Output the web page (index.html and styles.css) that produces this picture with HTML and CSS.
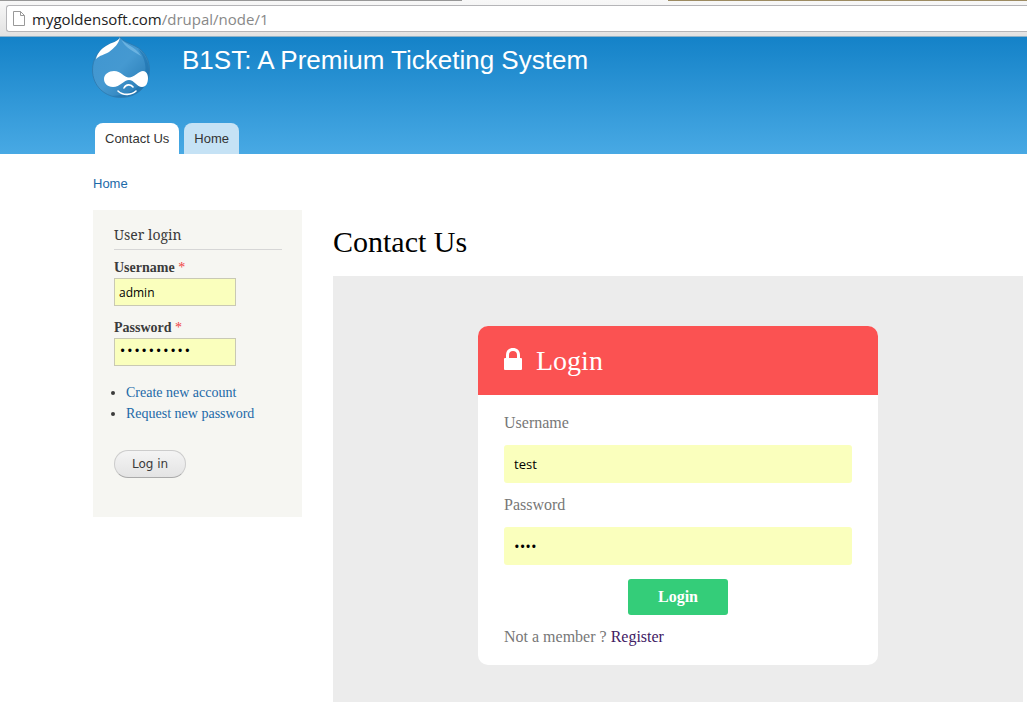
FILE: index.html
```html
<!DOCTYPE html>
<html lang="en">
<head>
<meta charset="utf-8">
<title>Contact Us | B1ST: A Premium Ticketing System</title>
<link rel="stylesheet" href="styles.css">
</head>
<body>
<div class="toolbar">
  <div class="tab-edge"><span class="tab-edge-left"></span><span class="tab-edge-right"></span></div>
  <div class="address">
    <svg class="page-icon" width="12" height="16" viewBox="0 0 12 16" fill="#fff" stroke="#999" aria-hidden="true"><path d="M.5 .5h7l4 4v10H.5zM7.500 .5v4h4"/></svg>
    <div class="url" role="textbox" aria-label="Address"><span class="host">mygoldensoft.com</span>/drupal/node/1</div>
  </div>
</div>
<header class="header">
  <div class="branding">
    <a class="logo" href="#" aria-label="Home">
      <svg width="58" height="61" viewBox="0 0 58 61" aria-hidden="true">
        <defs>
          <linearGradient id="drop" x1="0" y1="0" x2="1" y2="1"><stop offset="0" stop-color="#3f95d0"/><stop offset=".5" stop-color="#4599d1"/><stop offset="1" stop-color="#2174ae"/></linearGradient>
        </defs>
        <path fill="url(#drop)" stroke="#2f78ac" stroke-width=".8" d="M28 0C30 4 37 6 43 9C53 14 57.500 23 57.500 33C57.500 49 45 60.500 29 60.500C13 60.500 .5 49 .5 33C.5 22 6 14 14 9C20 5 26 5 28 0Z"/>
        <path fill="#1a6fab" opacity=".55" d="M46 12C54 22 56 34 50 44C45 53 36 58 20 59C43 64 57 50 57 34C57 25 53 16 46 12Z"/>
        <path fill="#8bc9ee" opacity=".55" d="M29 2C32 7 43 9 49 19C41 14 33 11 29 2Z"/>
        <path fill="#fff" d="M28 0C27 7 22 11 17 15C12 18 8 18 4 22C5 17 9 12 14 9C20 5 26 5 28 0Z"/>
        <path fill="#fff" d="M22 34C29 34 32 40.500 37 40.500C42 40.500 47 34 51 34C54 34 56 37 56 41C56 46 54 50 50 50C45 50 42 43 37 43C32 43 28 50 21 50C15 50 12 46 12 42C12 37 17 34 22 34Z"/>
        <path fill="none" stroke="#fff" stroke-width="1.600" stroke-linecap="round" d="M32 51C34 47 39 47 41 50M26 54C31 59 40 58 44 54"/>
      </svg>
    </a>
    <a class="site-name" href="#">B1ST: A Premium Ticketing System</a>
  </div>
  <nav class="tabs">
    <a class="tab tab-active" href="#">Contact Us</a>
    <a class="tab" href="#">Home</a>
  </nav>
</header>
<nav class="breadcrumb" aria-label="Breadcrumb"><a href="#">Home</a></nav>
<div class="columns">
  <aside class="sidebar">
    <h2 class="block-title">User login</h2>
    <form>
      <label class="side-label" for="side-user">Username <span class="required">*</span></label>
      <input class="side-input" id="side-user" type="text" value="admin">
      <label class="side-label" for="side-pass">Password <span class="required">*</span></label>
      <input class="side-input side-pass" id="side-pass" type="password" value="abcdefghij">
      <ul class="side-links">
        <li><a href="#">Create new account</a></li>
        <li><a href="#">Request new password</a></li>
      </ul>
      <button class="side-button" type="button">Log in</button>
    </form>
  </aside>
  <main class="main">
    <h1 class="page-title">Contact Us</h1>
    <div class="panel">
      <form class="card">
        <h2 class="card-head">
          <svg width="18" height="26" viewBox="0 0 18 26" aria-hidden="true"><path fill="#fff" d="M1 10H2V7C2 2.500 5 0 9 0S16 2.500 16 7V10H17Q18 10 18 11V21Q18 22 17 22H1Q0 22 0 21V11Q0 10 1 10ZM5 10H13V7C13 4.500 11.500 3 9 3S5 4.500 5 7Z"/></svg>
          <span>Login</span>
        </h2>
        <div class="card-body">
          <label class="card-label" for="user">Username</label>
          <input class="card-input" id="user" type="text" value="test">
          <label class="card-label" for="pass">Password</label>
          <input class="card-input card-pass" id="pass" type="password" value="test">
          <button class="card-button" type="button">Login</button>
          <p class="card-note">Not a member ? <a href="#">Register</a></p>
        </div>
      </form>
    </div>
  </main>
</div>
</body>
</html>
```
FILE: styles.css
```css
* { box-sizing: border-box; }
body {
  margin: 0;
  min-height: 100vh;
  display: flex;
  flex-direction: column;
  background: #fff;
  color: #3b3b3b;
  font-family: "Liberation Serif", serif;
}
a { color: #1c69a8; text-decoration: none; }
h1, h2, p, ul { margin: 0; font-weight: normal; }

.toolbar {
  padding: 0 0 4px 6px;
  background: linear-gradient(#f8f8f8, #e2e2e2);
  border-bottom: 1px solid #8fb2c8;
}
.tab-edge { display: flex; justify-content: space-between; height: 5px; margin-left: -6px; }
.tab-edge-left { width: 45%; height: 1px; background: #979797; }
.tab-edge-right { width: 35%; height: 1px; background: #9c8b62; }
.address {
  display: flex;
  align-items: center;
  gap: 7px;
  height: 27px;
  padding-left: 6px;
  border: 1px solid #b5b5b8;
  border-right: 0;
  border-radius: 3px 0 0 3px;
  background: #fff;
}
.url { color: #888; font: 15px/24px "Open Sans", sans-serif; }
.host { color: #222; }

.header {
  padding: 0 0 0 92px;
  background: linear-gradient(#1482c8, #48a9e4);
}
.branding { display: flex; gap: 32px; height: 86px; }
.logo { display: block; height: 61px; }
.site-name { padding-top: 7px; color: #fff; font: 26px/32px "Liberation Sans", sans-serif; }
.tabs { display: flex; gap: 5px; padding-left: 3px; }
.tab {
  padding: 0 10px;
  border-radius: 8px 8px 0 0;
  background: #c5e2f5;
  color: #333;
  font: 13px/31px "Liberation Sans", sans-serif;
}
.tab-active { background: #fff; }
.breadcrumb { padding: 21px 93px 17px; font: 13px/18px "Liberation Sans", sans-serif; }

.columns { flex: 1; display: flex; align-items: stretch; gap: 31px; padding: 0 4px 0 93px; }
.sidebar {
  flex: none;
  align-self: flex-start;
  width: 209px;
  padding: 15px 20px 39px 21px;
  background: #f6f6f2;
}
.block-title { padding-bottom: 4px; margin-bottom: 8px; border-bottom: 1px solid #d6d6d6; font: 14px/20px "Noto Serif", "Liberation Serif", serif; }
.side-label { display: block; font-weight: bold; font-size: 14px; line-height: 20px; }
.required { color: #f04040; font-weight: normal; }
.side-input {
  display: block;
  width: 122px;
  height: 28px;
  margin-bottom: 12px;
  padding: 0 4px;
  border: 1px solid #c9c9b4;
  border-radius: 0;
  background: #faffbd;
  color: #000;
  font: 12px "Open Sans", sans-serif;
}
.side-pass { font: 12px "Liberation Mono", monospace; }
.side-links { padding-left: 12px; margin: 16px 0 26px; font-size: 14px; line-height: 21px; }
.side-button {
  height: 28px;
  padding: 0 17px;
  border: 1px solid #ccc;
  border-bottom-color: #aaa;
  border-radius: 14px;
  background: linear-gradient(#f4f4f4, #e4e4e4);
  color: #3a3a3a;
  font: 12px "DejaVu Sans", sans-serif;
}

.main { flex: 1; display: flex; flex-direction: column; }
.page-title { padding: 15px 0 17px; color: #000; font-size: 30px; line-height: 34px; }
.panel { flex: 1; padding: 50px 20px 37px; background: #ececec; }
.card { max-width: 400px; margin: 0 auto; overflow: hidden; border-radius: 10px; background: #fff; }
.card-head { display: flex; align-items: center; gap: 14px; padding: 17px 26px; background: #fb5252; color: #fff; font-size: 28px; line-height: 35px; }
.card-body { display: flex; flex-direction: column; padding: 16px 26px 18px; color: #777; font-size: 16px; }
.card-label { margin-bottom: 10px; line-height: 24px; }
.card-input {
  width: 100%;
  height: 38px;
  margin-bottom: 10px;
  padding: 0 10px;
  border: 0;
  border-radius: 3px;
  background: #faffbd;
  color: #000;
  font: 13px "Open Sans", sans-serif;
}
.card-pass { font-size: 15px; }
.card-button {
  align-self: center;
  width: 100px;
  height: 36px;
  margin: 4px 0 12px;
  border: 0;
  border-radius: 3px;
  background: #34cd79;
  color: #fff;
  font: bold 16px "Liberation Serif", serif;
}
.card-note { line-height: 20px; }
.card-note a { color: #3f2064; }
```
